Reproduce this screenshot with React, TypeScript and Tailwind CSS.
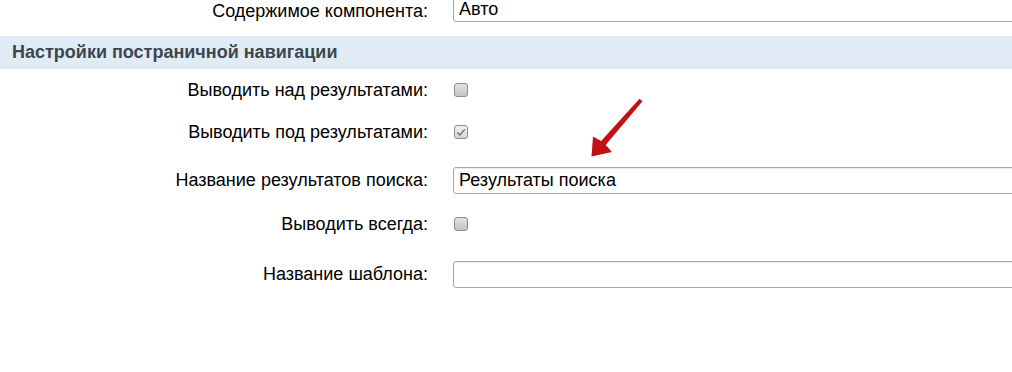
import React from 'react';

const font = { fontFamily: '"Liberation Sans", Arial, sans-serif' };

function Checkbox({ checked }: { checked?: boolean }) {
  return (
    <span
      className={
        'ml-[1px] inline-flex h-[14px] w-[14px] items-center justify-center rounded-[3px] border border-[#8c8c8c] ' +
        (checked
          ? 'bg-gradient-to-b from-[#f2f2f2] to-[#d6d6d6]'
          : 'bg-gradient-to-b from-[#e2e2e2] to-[#c3c3c3]')
      }
    >
      {checked && (
        <svg width="10" height="9" viewBox="0 0 10 9">
          <path d="M1.2 4.6 L3.8 7 L8.8 1.4" fill="none" stroke="#6e6e6e" strokeWidth="1.4" />
        </svg>
      )}
    </span>
  );
}

function TextInput({ value }: { value?: string }) {
  return (
    <div className="flex h-[27px] w-[600px] shrink-0 items-center rounded-[3px] border border-[#a3a7aa] bg-white px-[5px] text-[18px] leading-[20px] text-black shadow-[inset_0_1px_1px_rgba(0,0,0,0.08)]">
      {value}
    </div>
  );
}

function Row({ label, h, children }: { label: string; h: string; children: React.ReactNode }) {
  return (
    <div className={'flex items-center ' + h}>
      <div className="w-[428px] shrink-0 text-right text-[18px] text-black">{label}</div>
      <div className="ml-[25px] flex items-center">{children}</div>
    </div>
  );
}

export default function App() {
  return (
    <div className="relative h-[372px] w-[1012px] overflow-hidden bg-white" style={font}>
      <div className="flex h-[22px] items-center">
        <div className="w-[428px] shrink-0 text-right text-[18px] leading-[20px] text-black">
          Содержимое компонента:
        </div>
        <div className="ml-[25px] flex h-[22px] items-end">
          <TextInput value="Авто" />
        </div>
      </div>

      <div className="mt-[14px] flex h-[33px] items-center bg-[#e1ebf6] pl-[12px] text-[18px] font-bold text-[#3c464e]">
        Настройки постраничной навигации
      </div>

      <Row label="Выводить над результатами:" h="h-[42px]">
        <Checkbox />
      </Row>
      <Row label="Выводить под результатами:" h="h-[42px]">
        <Checkbox checked />
      </Row>
      <Row label="Название результатов поиска:" h="h-[54px]">
        <TextInput value="Результаты поиска" />
      </Row>
      <Row label="Выводить всегда:" h="h-[34px]">
        <Checkbox />
      </Row>
      <Row label="Название шаблона:" h="h-[66px]">
        <TextInput />
      </Row>

      <svg className="pointer-events-none absolute left-0 top-0" width="1012" height="372">
        <polygon
          points="591.5,156.5 593,136.5 601.1,141 639.5,98.7 642.5,101.3 605.7,145 612,152"
          fill="#c01212"
        />
      </svg>
    </div>
  );
}
